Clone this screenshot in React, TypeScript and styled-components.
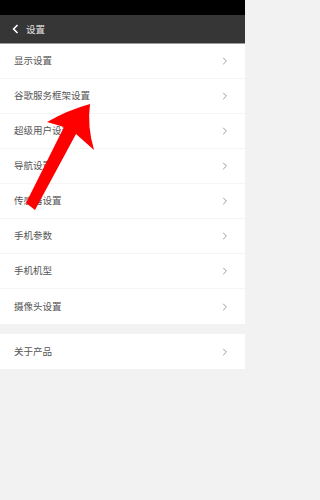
import React from "react";
import styled, { createGlobalStyle } from "styled-components";

const Global = createGlobalStyle`
  html, body { margin: 0; padding: 0; background: #f2f2f2; }
  body { font-family: "Noto Sans CJK SC", "Noto Sans", sans-serif; }
`;

const Screen = styled.div`
  position: relative;
  width: 245px;
  height: 500px;
  background: #f2f2f2;
  overflow: hidden;
`;

const StatusBar = styled.div`
  height: 15px;
  background: #000;
`;

const Header = styled.div`
  height: 28px;
  background: #363636;
  border-bottom: 1px solid #9a9a9a;
  display: flex;
  align-items: center;
  padding-left: 12px;
  gap: 7px;
  color: #e6e6e6;
  font-size: 9.5px;
`;

const Group = styled.div<{ $gap?: number }>`
  background: #fff;
  margin-top: ${(p) => p.$gap ?? 0}px;
`;

const Row = styled.div<{ $last?: boolean }>`
  height: 35px;
  display: flex;
  align-items: center;
  justify-content: space-between;
  padding: 0 17px 0 14px;
  box-sizing: border-box;
  border-bottom: ${(p) => (p.$last ? "none" : "1px solid #f4f4f4")};
  color: #555;
  font-size: 9.5px;
  line-height: 1;
`;

const Arrow = styled.svg`
  position: absolute;
  left: 0;
  top: 0;
  pointer-events: none;
`;

const Chevron = () => (
  <svg width="6" height="8" viewBox="0 0 6 8">
    <path d="M1.2 0.8 L4.4 4 L1.2 7.2" fill="none" stroke="#9a9a9a" strokeWidth="1" />
  </svg>
);

const BackIcon = () => (
  <svg width="7" height="10" viewBox="0 0 7 10">
    <path d="M5.5 1 L1.6 5 L5.5 9" fill="none" stroke="#fff" strokeWidth="1.6" />
  </svg>
);

const items = [
  "显示设置",
  "谷歌服务框架设置",
  "超级用户设置",
  "导航设置",
  "传感器设置",
  "手机参数",
  "手机机型",
  "摄像头设置",
];

export default function App() {
  return (
    <Screen>
      <Global />
      <StatusBar />
      <Header>
        <BackIcon />
        <span>设置</span>
      </Header>
      <Group>
        {items.map((t, i) => (
          <Row key={t} $last={i === items.length - 1}>
            <span>{t}</span>
            <Chevron />
          </Row>
        ))}
      </Group>
      <Group $gap={10}>
        <Row $last>
          <span>关于产品</span>
          <Chevron />
        </Row>
      </Group>
      <Arrow width="245" height="500" viewBox="0 0 245 500">
        <path
          d="M90 104 Q68 110 47 122 L64 127 L26 203 L35 210 L76 134 L94 150 Q87 126 90 104 Z"
          fill="#ff0000"
        />
      </Arrow>
    </Screen>
  );
}
